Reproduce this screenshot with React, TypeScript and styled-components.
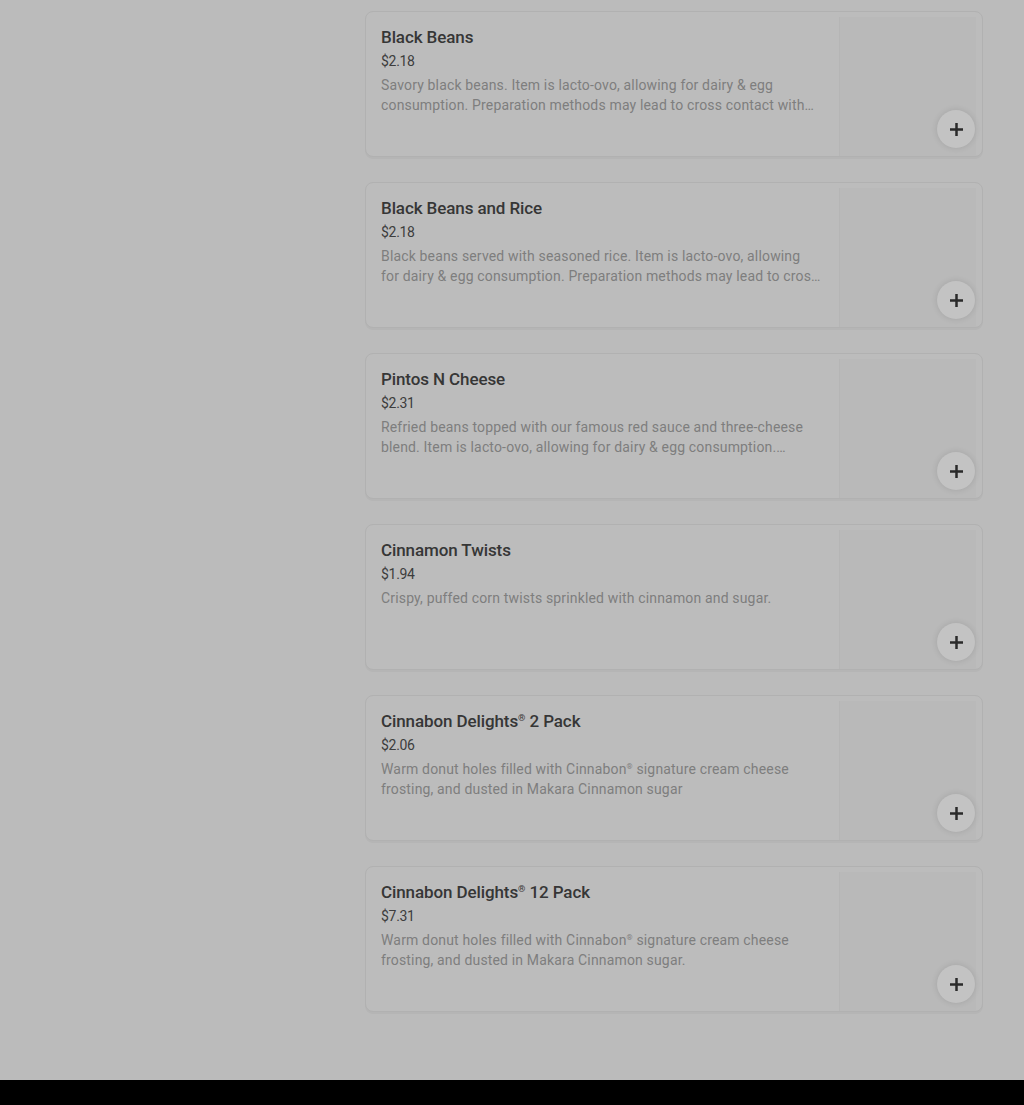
import React from 'react';
import styled, { createGlobalStyle } from 'styled-components';

const GlobalStyle = createGlobalStyle`
  html, body {
    margin: 0;
    padding: 0;
    background: #bbbbbb;
  }
  body {
    font-family: Roboto, "Liberation Sans", sans-serif;
  }
`;

const Page = styled.div`
  display: flex;
  flex-direction: column;
  min-height: 1105px;
`;

const Main = styled.div`
  flex: 1;
  display: grid;
  grid-template-columns: 365px 618px;
  padding-top: 11px;
  padding-bottom: 68px;
`;

const Sidebar = styled.aside``;

const List = styled.ul`
  list-style: none;
  margin: 0;
  padding: 0;
  display: flex;
  flex-direction: column;
  gap: 25px;
`;

const Card = styled.li`
  position: relative;
  display: flex;
  height: 146px;
  box-sizing: border-box;
  border: 1px solid #b1b1b1;
  border-radius: 8px;
  background: #bcbcbc;
  box-shadow: 0 2px 0 rgba(0, 0, 0, 0.03);
  overflow: hidden;
`;

const Info = styled.div`
  width: 440px;
  padding: 15px 0 0 15px;
  display: flex;
  flex-direction: column;
  gap: 4px;
`;

const Title = styled.h3`
  margin: 0;
  font-size: 17px;
  line-height: 20px;
  font-weight: 500;
  letter-spacing: -0.1px;
  color: #363636;
`;

const Price = styled.div`
  font-size: 14px;
  line-height: 20px;
  letter-spacing: -0.3px;
  color: #3d3d3d;
`;

const Description = styled.p`
  margin: 0;
  font-size: 14px;
  line-height: 20px;
  letter-spacing: 0.16px;
  color: #7e7e7e;
  display: -webkit-box;
  -webkit-line-clamp: 2;
  -webkit-box-orient: vertical;
  overflow: hidden;
`;

const Reg = styled.sup`
  font-size: 0.55em;
  line-height: 0;
  vertical-align: 0.6em;
`;

const Thumb = styled.div`
  margin: 5px 6px 0 auto;
  width: 136px;
  background: #b9b9b9;
  border-left: 1px solid #b5b5b5;
`;

const AddButton = styled.button`
  position: absolute;
  right: 7px;
  bottom: 8px;
  width: 38px;
  height: 38px;
  border: none;
  border-radius: 50%;
  background: #c3c3c3;
  box-shadow: 0 0 6px rgba(0, 0, 0, 0.12);
  display: flex;
  align-items: center;
  justify-content: center;
  padding: 0;
  cursor: pointer;
`;

const Footer = styled.footer`
  height: 25px;
  background: #000;
`;

const PlusIcon = () => (
  <svg width="13" height="13" viewBox="0 0 13 13">
    <path d="M5.25 0h2.5v5.25H13v2.5H7.75V13h-2.5V7.75H0v-2.5h5.25z" fill="#2a2a2a" />
  </svg>
);

// render "®" as a small superscript, like the reference does
const withReg = (text: string) =>
  text.split('®').map((part, i, arr) => (
    <React.Fragment key={i}>
      {part}
      {i < arr.length - 1 && <Reg>®</Reg>}
    </React.Fragment>
  ));

interface MenuItem {
  name: string;
  price: string;
  description: string;
}

const items: MenuItem[] = [
  {
    name: 'Black Beans',
    price: '$2.18',
    description:
      'Savory black beans. Item is lacto-ovo, allowing for dairy & egg consumption. Preparation methods may lead to cross contact with meat products.',
  },
  {
    name: 'Black Beans and Rice',
    price: '$2.18',
    description:
      'Black beans served with seasoned rice. Item is lacto-ovo, allowing for dairy & egg consumption. Preparation methods may lead to cross contact with meat products.',
  },
  {
    name: 'Pintos N Cheese',
    price: '$2.31',
    description:
      'Refried beans topped with our famous red sauce and three-cheese blend. Item is lacto-ovo, allowing for dairy & egg consumption. Preparation methods may lead to cross contact.',
  },
  {
    name: 'Cinnamon Twists',
    price: '$1.94',
    description: 'Crispy, puffed corn twists sprinkled with cinnamon and sugar.',
  },
  {
    name: 'Cinnabon Delights® 2 Pack',
    price: '$2.06',
    description:
      'Warm donut holes filled with Cinnabon® signature cream cheese frosting, and dusted in Makara Cinnamon sugar',
  },
  {
    name: 'Cinnabon Delights® 12 Pack',
    price: '$7.31',
    description:
      'Warm donut holes filled with Cinnabon® signature cream cheese frosting, and dusted in Makara Cinnamon sugar.',
  },
];

const App = () => {
  return (
    <Page>
      <GlobalStyle />
      <Main>
        <Sidebar />
        <List>
          {items.map((item) => (
            <Card key={item.name}>
              <Info>
                <Title>{withReg(item.name)}</Title>
                <Price>{item.price}</Price>
                <Description>{withReg(item.description)}</Description>
              </Info>
              <Thumb />
              <AddButton aria-label={`Add ${item.name}`}>
                <PlusIcon />
              </AddButton>
            </Card>
          ))}
        </List>
      </Main>
      <Footer />
    </Page>
  );
};

export default App;
